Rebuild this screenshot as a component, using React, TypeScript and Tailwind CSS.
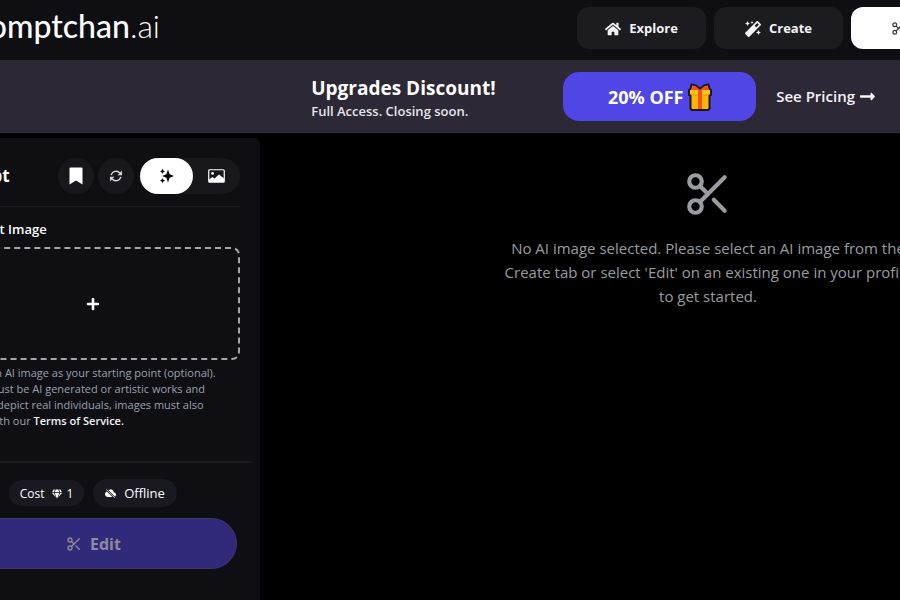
import React from 'react'
import { FaHome, FaMagic, FaPlus, FaLongArrowAltRight, FaGem } from 'react-icons/fa'
import { IoCloudOffline } from 'react-icons/io5'
import { Scissors } from 'lucide-react'

const tabs = [
  { name: 'Explore', icon: <FaHome size={16} />, active: false },
  { name: 'Create', icon: <FaMagic size={16} />, active: false },
  { name: 'Edit', icon: <Scissors size={15} />, active: true },
]

const GiftIcon = () => (
  <svg width="24" height="28" viewBox="0 0 24 28" aria-hidden="true">
    <path
      d="M3.5 1.5 L8 2.5 L12 6 L16 2.5 L20.5 1.5 L21.5 6 L23 7 V12 H21.5 V25 Q21.5 27 19.5 27 H4.5 Q2.5 27 2.5 25 V12 H1 V7 L2.5 6 Z"
      fill="#ffb800" stroke="#1c1626" strokeWidth="2" strokeLinejoin="round"
    />
    <path d="M4.5 2.5 L8 3.5 L12 7 L16 3.5 L19.5 2.5 L20.5 7 H3.5 Z" fill="#f4511e" />
    <path d="M2 7 H22 V11.5 H2 Z" fill="#ffc21a" />
    <path d="M10 7 H14 V26 H10 Z" fill="#f4511e" />
    <path d="M3.5 12 H10 M14 12 H20.5" stroke="#e89b00" strokeWidth="1" />
  </svg>
)

const BookmarkIcon = () => (
  <svg width="14" height="18" viewBox="0 0 14 18" fill="currentColor" aria-hidden="true">
    <path d="M1.5 0.5 H12.5 Q13.5 0.5 13.5 1.5 V17.5 L7 13.5 L0.5 17.5 V1.5 Q0.5 0.5 1.5 0.5 Z" />
  </svg>
)

const RefreshIcon = () => (
  <svg width="14" height="14" viewBox="0 0 14 14" aria-hidden="true">
    <path d="M2.2 6.2 A5 5 0 0 1 11 4.2 M11.8 7.8 A5 5 0 0 1 3 9.8" fill="none" stroke="currentColor" strokeWidth="1.4" />
    <path d="M13 1.6 V6.2 H8.6 Z M1 12.4 V7.8 H5.4 Z" fill="currentColor" />
  </svg>
)

const SparklesIcon = () => (
  <svg width="15" height="16" viewBox="0 0 15 16" fill="currentColor" aria-hidden="true">
    <path d="M9 1.5 L10.6 6.2 L15 8 L10.6 9.8 L9 14.5 L7.4 9.8 L3.2 8 L7.4 6.2 Z" />
    <path d="M3.5 0.8 L4.3 2.6 L6 3.4 L4.3 4.2 L3.5 6 L2.7 4.2 L1 3.4 L2.7 2.6 Z" />
    <path d="M3.5 10 L4.3 11.8 L6 12.6 L4.3 13.4 L3.5 15.2 L2.7 13.4 L1 12.6 L2.7 11.8 Z" />
  </svg>
)

const ImageIcon = () => (
  <svg width="17" height="14" viewBox="0 0 17 14" aria-hidden="true">
    <rect x="0.75" y="0.75" width="15.5" height="12.5" rx="1" fill="none" stroke="currentColor" strokeWidth="1.2" />
    <circle cx="4.6" cy="4.4" r="1.4" fill="currentColor" />
    <path d="M1 13 V10.5 L4.5 8 L6.5 9.5 L11 5.5 L16 9.5 V13 Z" fill="currentColor" />
  </svg>
)

const Header = () => (
  <header className="flex h-[60px] items-start justify-between overflow-hidden bg-[#0f0e13]">
    <a href="#" className="flex w-40 justify-end whitespace-nowrap pt-1.5 font-[Lato] text-[32px] leading-10 text-white">
      <span className="font-medium">Promptchan</span>
      <span className="font-light">.ai</span>
    </a>
    <nav className="-mr-20 flex shrink-0 gap-2 pt-[7px]">
      {tabs.map((tab) => (
        <button
          key={tab.name}
          className={`flex h-[42px] w-[129px] items-center justify-center gap-2 rounded-xl pt-px text-[13px] font-bold ${
            tab.active ? 'bg-white text-[#3a3a3a]' : 'bg-[#1c1b20] text-gray-100'
          }`}
        >
          {tab.icon}
          {tab.name}
        </button>
      ))}
    </nav>
  </header>
)

const Banner = () => (
  <div className="flex h-[73px] items-center justify-end bg-[#2c2835] pr-6">
    <div className="w-[252px] whitespace-nowrap pt-1">
      <h2 className="text-[19px] font-bold leading-6 text-white">Upgrades Discount!</h2>
      <p className="text-[13px] font-semibold leading-[22px] text-gray-200">Full Access. Closing soon.</p>
    </div>
    <button className="flex h-[49px] w-[193px] items-center justify-center gap-1 rounded-2xl bg-[#4f46e5] text-lg font-bold text-white">
      20% OFF
      <GiftIcon />
    </button>
    <a href="#" className="ml-5 flex items-center gap-1 whitespace-nowrap text-[15px] font-semibold text-gray-100">
      See Pricing
      <FaLongArrowAltRight size={17} />
    </a>
  </div>
)

const Sidebar = () => (
  <aside className="-ml-[74px] mt-[5px] w-[334px] shrink-0 rounded-tr-md bg-[#0f0e13] pt-5">
    <div className="px-5">
      <div className="flex h-9 items-center">
        <h1 className="text-[17px] font-bold text-white">Prompt</h1>
        <button aria-label="Saved prompts" className="ml-auto flex size-9 items-center justify-center rounded-full bg-[#18171c] text-white">
          <BookmarkIcon />
        </button>
        <button aria-label="Refresh" className="ml-1 flex size-9 items-center justify-center rounded-full bg-[#18171c] text-gray-300">
          <RefreshIcon />
        </button>
        <div className="ml-1.5 flex w-[100px] rounded-full bg-[#18171c]">
          <button aria-label="Generate" className="flex h-9 w-[53px] items-center justify-center rounded-full bg-white text-black">
            <SparklesIcon />
          </button>
          <button aria-label="Image" className="flex h-9 flex-1 items-center justify-center text-white">
            <ImageIcon />
          </button>
        </div>
      </div>
      <hr className="mt-3 border-[#1a191f]" />
      <h3 className="mt-3 text-[13px] font-semibold leading-5 text-white">Add Start Image</h3>
      <button aria-label="Add image" className="mt-2 flex h-[113px] w-full items-center justify-center rounded-lg border-2 border-dashed border-[#a5a5ab] text-white">
        <FaPlus size={14} />
      </button>
      <p className="mt-[5px] whitespace-nowrap pl-0.5 text-[11px] leading-4 text-gray-400">
        Choose an AI image as your starting point (optional).
        <br />
        Images must be AI generated or artistic works and
        <br />
        must not depict real individuals, images must also
        <br />
        comply with our <a href="#" className="font-semibold text-gray-100">Terms of Service.</a>
      </p>
    </div>
    <hr className="mr-2 mt-8 border-t-2 border-[#1a191f]" />
    <div className="mt-4 flex items-center gap-[9px] pl-[83px] text-white">
      <div className="flex h-[26px] w-[75px] items-center justify-center gap-1 rounded-full bg-[#1a191f] pt-px text-xs">
        <span className="mr-1">Cost</span>
        <FaGem size={10} />
        <span>1</span>
      </div>
      <div className="flex h-7 w-[84px] items-center justify-center gap-2 rounded-full bg-[#1a191f] pt-px text-[13px]">
        <IoCloudOffline size={11} />
        Offline
      </div>
    </div>
    <button className="ml-6 mt-[11px] flex h-[51px] w-[287px] items-center justify-center gap-2 rounded-full border border-[#3d3672] bg-[#31297a] font-bold text-[#8e8b9c]">
      <Scissors size={16} />
      Edit
    </button>
  </aside>
)

const App = () => {
  return (
    <div className="flex h-screen flex-col overflow-hidden bg-black font-['Open_Sans',sans-serif]">
      <Header />
      <Banner />
      <main className="flex min-h-0 flex-1">
        <Sidebar />
        <section className="-mr-64 flex flex-1 flex-col items-center pt-9 text-[#9a9ca2]">
          <Scissors size={50} />
          <p className="mt-[17px] whitespace-nowrap text-center text-[15px] leading-6">
            No AI image selected. Please select an AI image from the
            <br />
            Create tab or select 'Edit' on an existing one in your profile
            <br />
            to get started.
          </p>
        </section>
      </main>
    </div>
  )
}

export default App
